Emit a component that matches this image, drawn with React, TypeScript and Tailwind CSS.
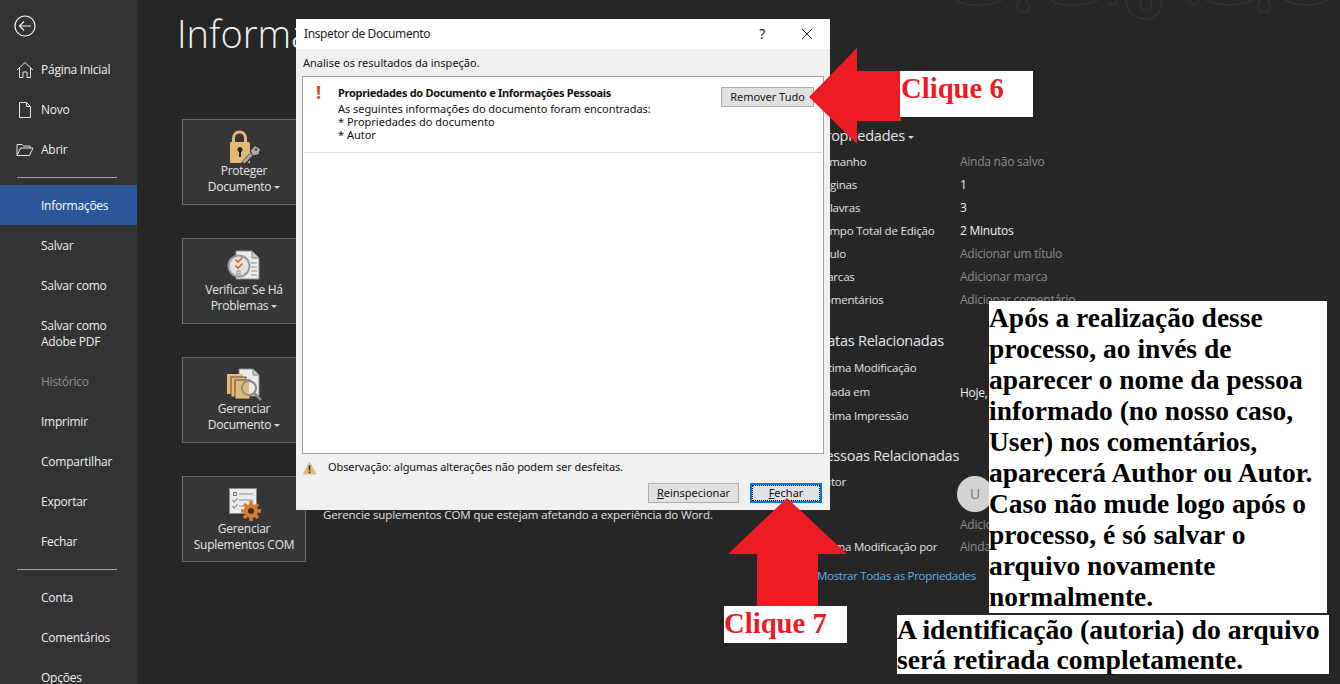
import React from "react";

const uiFont = "font-['Open_Sans','Noto_Sans',sans-serif]";
const serifFont = "font-['Liberation_Serif',serif]";

const LockIcon = () => (
    <svg width="40" height="34" viewBox="-4 0 40 34">
        <path d="M5.500 13V8.500C5.500 4.500 8 2 11.500 2S17.500 4.500 17.500 8.500V13" fill="none" stroke="#e4b877" strokeWidth="3"/>
        <path d="M2 12.500C2 12 2.500 12 3 12H20C21 12 22 12.500 22 14V33H3C2.500 33 2 32.500 2 32Z" fill="#e4b877"/>
        <circle cx="12" cy="19.500" r="2.500" fill="#262626"/>
        <rect x="11" y="20" width="2" height="7" fill="#262626"/>
        <path d="M15 34L23 25.500" stroke="#333" strokeWidth="5"/>
        <path d="M15.500 32.500L24 24" stroke="#a9a9a9" strokeWidth="3"/>
        <path d="M22 21L27 15.500L32.500 19L31 24.500L25 26Z" fill="#a9a9a9" stroke="#333" strokeWidth="1"/>
        <circle cx="28" cy="19.500" r="1.200" fill="#444"/>
    </svg>
);

const CheckIcon = () => (
    <svg width="40" height="34" viewBox="-2 0 40 34">
        <path d="M10 2H26L33 9V30H10Z" fill="#ececec" stroke="#8c8c8c"/>
        <path d="M26 2V9H33" fill="#c9c9c9" stroke="#8c8c8c"/>
        <path d="M25 14H31M25 18H31M25 22H31M25 26H31" stroke="#8c8c8c"/>
        <circle cx="13" cy="17" r="10.500" fill="#e2e2e2" stroke="#9a9a9a" strokeWidth="2"/>
        <path d="M9.500 10.500L12 13L16.500 8.500M9.500 16.500L12 19L16.500 14.500" fill="none" stroke="#d1603a" strokeWidth="1.700"/>
        <rect x="11" y="22" width="3" height="3" fill="none" stroke="#8c8c8c"/>
    </svg>
);

const ManageIcon = () => (
    <svg width="40" height="34" viewBox="-1 0 40 34">
        <path d="M14 1H28L34 7V28H14Z" fill="#ececec" stroke="#8c8c8c"/>
        <path d="M28 1V7H34" fill="#c9c9c9" stroke="#8c8c8c"/>
        <rect x="2" y="6" width="16" height="20" fill="#e4b877"/>
        <rect x="6" y="9" width="15" height="20" fill="#e4b877" stroke="#333" strokeWidth="0.800"/>
        <rect x="10" y="12" width="15" height="19" fill="#e4b877" stroke="#333" strokeWidth="0.800"/>
        <circle cx="24" cy="20" r="7" fill="#ececec" stroke="#8c8c8c" strokeWidth="2.200"/>
        <path d="M24 14A6 6 0 0 0 24 26Z" fill="#e4b877"/>
        <path d="M29 25L36 32" stroke="#8c8c8c" strokeWidth="2.500"/>
    </svg>
);

const AddinIcon = () => (
    <svg width="40" height="34" viewBox="-3 0 40 34">
        <rect x="2.500" y="1.500" width="27" height="25" fill="#ececec" stroke="#8c8c8c"/>
        <rect x="6.500" y="5.500" width="3" height="3" fill="none" stroke="#777"/>
        <path d="M12 7H26M12 13H26M12 19H20" stroke="#8c8c8c"/>
        <path d="M5.500 13L7.500 15L10.500 11M5.500 19L7.500 21L10.500 17" fill="none" stroke="#8c8c8c" strokeWidth="1.200"/>
        <circle cx="24" cy="24" r="5" fill="#333333" stroke="#d9792a" strokeWidth="4"/>
        <path d="M24 14V18M24 30V34M14 24H18M30 24H34M17 17L19.800 19.800M28.200 28.200L31 31M31 17L28.200 19.800M19.800 28.200L17 31" stroke="#d9792a" strokeWidth="3.500"/>
    </svg>
);

const Swirls = () => (
    <svg className="absolute left-[813px] top-0" width="390" height="22" viewBox="0 0 390 22" fill="none" stroke="#333333" strokeWidth="1.500">
        <path d="M5 0C20 8 40 6 52 0"/>
        <path d="M70 0C64 6 68 12 74 12C80 12 82 6 76 0"/>
        <path d="M100 0C115 8 135 6 148 0"/>
        <path d="M166 0C170 6 158 6 158 1"/>
        <circle cx="196" cy="4" r="6"/>
        <path d="M176 0C176 12 186 19 196 19C206 19 212 10 212 0"/>
        <path d="M240 0C236 6 248 6 248 0"/>
        <path d="M256 0C270 7 290 6 304 0"/>
        <path d="M310 0C306 6 308 12 314 12C320 12 322 6 318 0"/>
        <path d="M335 0C350 7 365 6 378 0"/>
    </svg>
);

const Caret = () => (
    <span className="inline-block align-middle ml-[3px] w-0 h-0 border-x-[3px] border-x-transparent border-t-[3px] border-t-[#d6d6d6]"/>
);

const navTop = ["Página Inicial", "Novo", "Abrir"];
const navBottom = ["Conta", "Comentários", "Opções"];
const navMiddle = ["Salvar", "Salvar como"];
const navAfter = ["Imprimir", "Compartilhar", "Exportar", "Fechar"];

const navIcons: Record<string, React.ReactNode> = {
    "Página Inicial": (
        <svg width="18" height="18" viewBox="0 0 18 18" fill="none" stroke="#e6e6e6">
            <path d="M1 9L9 1.500L17 9M3.500 7V16.500H7V11H11V16.500H14.500V7"/>
        </svg>
    ),
    "Novo": (
        <svg width="18" height="18" viewBox="0 0 18 18" fill="none" stroke="#e6e6e6">
            <path d="M3.500 1.500H10.500L14.500 5.500V16.500H3.500ZM10.500 1.500V5.500H14.500"/>
        </svg>
    ),
    "Abrir": (
        <svg width="18" height="18" viewBox="0 0 18 18" fill="none" stroke="#e6e6e6">
            <path d="M1 14.500V3.500H6L7.500 5H14V7M1 14.500H13.500L17 7H4.500Z"/>
        </svg>
    ),
};

const NavItem = ({label, className}: { label: string; className?: string }) => (
    <div className={`relative flex items-center h-10 pl-[41px] text-[12px] tracking-[-0.25px] text-[#efefef] ${className ?? ""}`}>
        {navIcons[label] && <span className="absolute left-[16px] top-[11px]">{navIcons[label]}</span>}
        {label}
    </div>
);

const Sidebar = () => (
    <nav className="w-[137px] shrink-0 h-full bg-[#333333]">
        <div className="h-[50px] pl-[14px] pt-[15px]">
            <svg width="22" height="22" viewBox="0 0 22 22" fill="none" stroke="#f0f0f0" strokeWidth="1.200">
                <circle cx="11" cy="11" r="10"/>
                <path d="M17 11H5.500M10 6.500L5.500 11L10 15.500"/>
            </svg>
        </div>
        {navTop.map((item) => <NavItem key={item} label={item}/>)}
        <div className="ml-[17px] w-[100px] mt-[7px] mb-[7px] h-px bg-[#a6a6a6]"/>
        <NavItem label="Informações" className="pt-[2px] !text-white bg-[#2b579a]"/>
        {navMiddle.map((item) => <NavItem key={item} label={item} className="pt-[2px]"/>)}
        <div className="h-[57px] pl-[41px] pt-[13px] text-[12px] tracking-[-0.25px] leading-[16px] text-[#efefef]">
            Salvar como<br/>Adobe PDF
        </div>
        <NavItem label="Histórico" className="!text-[#8f8f8f]"/>
        {navAfter.map((item) => <NavItem key={item} label={item}/>)}
        <div className="ml-[17px] w-[100px] mt-[7px] mb-[8px] h-px bg-[#a6a6a6]"/>
        {navBottom.map((item) => <NavItem key={item} label={item}/>)}
    </nav>
);

const ToolButton = ({icon, lines, caret, labelClass}: {
    icon: React.ReactNode;
    lines: string[];
    caret?: boolean;
    labelClass?: string;
}) => (
    <div className="w-[124px] h-[86px] shrink-0 border border-[#6b6b6b] bg-[#363636] flex flex-col items-center pt-[10px] text-[12px] tracking-[-0.25px] leading-[16px] text-[#e6e6e6]">
        <div className={`h-[32px] ${labelClass ?? "mb-[1px]"}`}>{icon}</div>
        {lines.map((line, i) => (
            <div key={line}>{line}{caret && i === lines.length - 1 && <Caret/>}</div>
        ))}
    </div>
);

const PropRow = ({label, value, muted, className}: {
    label: string;
    value?: string;
    muted?: boolean;
    className?: string;
}) => (
    <div className={`flex items-center text-[12px] leading-[16px] text-[#e2e2e2] ${className ?? "h-[23px]"}`}>
        <div className="w-[143px] shrink-0 whitespace-nowrap text-[11.500px] tracking-[-0.2px]">{label}</div>
        {value && <div className={`pt-px tracking-[-0.25px] ${muted ? "text-[#8d8d8d]" : "text-[#f2f2f2]"}`}>{value}</div>}
    </div>
);

const Heading = ({children, className}: { children: React.ReactNode; className: string }) => (
    <div className={`text-[14.500px] tracking-[-0.25px] leading-[20px] text-[#e6e6e6] ${className}`}>{children}</div>
);

const Properties = () => (
    <div className="w-[400px] shrink-0 pt-[67px]">
        <Heading className="h-[24px]">Propriedades<Caret/></Heading>
        <PropRow label="Tamanho" value="Ainda não salvo" muted/>
        <PropRow label="Páginas" value="1"/>
        <PropRow label="Palavras" value="3"/>
        <PropRow label="Tempo Total de Edição" value="2 Minutos"/>
        <PropRow label="Título" value="Adicionar um título" muted/>
        <PropRow label="Marcas" value="Adicionar marca" muted/>
        <PropRow label="Comentários" value="Adicionar comentário" muted/>
        <Heading className="mt-[20px] h-[25px]">Datas Relacionadas</Heading>
        <PropRow label="Última Modificação" className="h-[24px]"/>
        <PropRow label="Criada em" value="Hoje," className="h-[24px]"/>
        <PropRow label="Última Impressão" className="h-[24px]"/>
        <Heading className="mt-[18px] h-[27px]">Pessoas Relacionadas</Heading>
        <div className="flex h-[44px] text-[11.500px] tracking-[-0.2px] leading-[16px] text-[#e2e2e2]">
            <div className="w-[140px] shrink-0 pt-[1px]">Autor</div>
            <div className="w-9 h-9 mt-[3px] rounded-full bg-[#d3d3d3] flex items-center justify-center text-[14px] text-[#777777]">U</div>
        </div>
        <div className="h-[18px] pl-[143px] text-[12px] tracking-[-0.25px] leading-[16px] text-[#8d8d8d]">Adicionar um autor</div>
        <PropRow label="Última Modificação por" value="Ainda não salvo" muted/>
        <div className="mt-[10px] text-[11.500px] tracking-[-0.3px] leading-[16px] text-[#63b1ee]">Mostrar Todas as Propriedades</div>
    </div>
);

const Dialog = () => (
    <div className="absolute left-[296px] top-[19px] w-[534px] h-[491px] bg-[#f0f0f0] flex flex-col text-[11px] text-[#111111] font-['Noto_Sans',sans-serif]">
        <div className="h-[30px] shrink-0 bg-white flex items-center pl-[8px] text-[12px] tracking-[-0.4px] text-[#222222]">
            <span className="flex-1">Inspetor de Documento</span>
            <span className="w-[16px] text-center text-[14px] mr-[31px] -mt-[2px]">?</span>
            <svg className="mr-[17px]" width="12" height="12" viewBox="0 0 12 12" stroke="#222222">
                <path d="M1 1L11 11M11 1L1 11"/>
            </svg>
        </div>
        <div className="h-[27px] shrink-0 pl-[7px] pt-[2px] flex items-center">Analise os resultados da inspeção.</div>
        <div className="mx-[6px] h-[378px] shrink-0 bg-white border border-[#a0a0a0]">
            <div className="h-[76px] mx-px border-b border-[#dddddd] flex">
                <div className="w-[34px] pl-[12px] pt-[4px] text-[18px] leading-[22px] font-bold text-[#c94f2d]">!</div>
                <div className="flex-1 pt-[9px] leading-[13px]">
                    <div className="font-bold tracking-[-0.3px] mb-[3px]">Propriedades do Documento e Informações Pessoais</div>
                    <div className="tracking-[-0.05px]">As seguintes informações do documento foram encontradas:</div>
                    <div>* Propriedades do documento</div>
                    <div>* Autor</div>
                </div>
                <div className="mr-[8px] mt-[10px] w-[93px] h-[20px] pt-[1px] bg-[#e1e1e1] border border-[#adadad] flex items-center justify-center">Remover Tudo</div>
            </div>
        </div>
        <div className="h-[27px] shrink-0 flex items-center pl-[6px]">
            <svg width="15" height="14" viewBox="0 0 15 14">
                <path d="M7.500 0.500L14.500 13.500H0.500Z" fill="#e4b877"/>
                <rect x="6.700" y="4.500" width="1.600" height="5" fill="#333333"/>
                <rect x="6.700" y="10.500" width="1.600" height="1.600" fill="#333333"/>
            </svg>
            <span className="ml-[11px] tracking-[-0.1px]">Observação: algumas alterações não podem ser desfeitas.</span>
        </div>
        <div className="flex justify-end pr-[8px] mt-[2px]">
            <div className="w-[91px] h-[20px] bg-[#e1e1e1] border border-[#adadad] flex items-center justify-center"><span><u>R</u>einspecionar</span></div>
            <div className="ml-[11px] w-[72px] h-[20px] bg-[#e1e1e1] border-2 border-[#0078d7] flex items-center justify-center">
                <div className="w-[68px] h-[16px] border border-dotted border-black flex items-center justify-center"><span><u>F</u>echar</span></div>
            </div>
        </div>
    </div>
);

const CalloutLeft = () => (
    <svg className="absolute left-[808px] top-[47px]" width="94" height="98" viewBox="0 0 94 98">
        <path d="M1 50L49 1V24H93V74H49V97Z" fill="#ed1c24"/>
    </svg>
);

const CalloutUp = () => (
    <svg className="absolute left-[727px] top-[497px]" width="121" height="110" viewBox="0 0 121 110">
        <path d="M60 1L120 57H91V110H30V57H1Z" fill="#ed1c24"/>
    </svg>
);

const App = () => {
    return (
        <div className={`relative flex w-[1340px] h-[684px] overflow-hidden bg-[#262626] ${uiFont}`}>
            <Sidebar/>
            <main className="relative flex-1 min-w-0">
                <Swirls/>
                <h1 className="pl-[40px] pt-[7px] h-[119px] text-[38px] leading-[52px] font-light text-[#efefef]">Informações</h1>
                <div className="absolute left-[45px] top-[119px] flex flex-col gap-[33px]">
                    <ToolButton icon={<LockIcon/>} lines={["Proteger", "Documento"]} caret/>
                    <ToolButton icon={<CheckIcon/>} lines={["Verificar Se Há", "Problemas"]} caret/>
                    <ToolButton icon={<ManageIcon/>} lines={["Gerenciar", "Documento"]} caret/>
                    <div className="flex">
                        <ToolButton icon={<AddinIcon/>} lines={["Gerenciar", "Suplementos COM"]} labelClass="mb-[2px]"/>
                        <div className="ml-[17px] pt-[31px] text-[11.500px] tracking-[-0.1px] leading-[16px] text-[#e2e2e2] whitespace-nowrap">
                            Gerencie suplementos COM que estejam afetando a experiência do Word.
                        </div>
                    </div>
                </div>
                <div className="absolute left-[680px] top-[59px]">
                    <Properties/>
                </div>
            </main>
            <Dialog/>
            <CalloutLeft/>
            <CalloutUp/>
            <div className={`absolute left-[900px] top-[71px] w-[133px] h-[46px] bg-white pl-px text-[28.700px] leading-[34px] font-bold text-[#ed1c24] ${serifFont}`}>Clique 6</div>
            <div className={`absolute left-[724px] top-[606px] w-[123px] h-[37px] bg-white text-[28.700px] leading-[35px] font-bold text-[#ed1c24] ${serifFont}`}>Clique 7</div>
            <div className={`absolute left-[989px] top-[301px] w-[338px] h-[312px] pt-px bg-white text-[27.500px] leading-[31px] font-bold text-black ${serifFont}`}>
                Após a realização desse processo, ao invés de aparecer o nome da pessoa informado (no nosso caso, User) nos comentários, aparecerá Author ou Autor. Caso não mude logo após o processo, é só salvar o arquivo novamente normalmente.
            </div>
            <div className={`absolute left-[897px] top-[615px] w-[432px] h-[59px] bg-white text-[27.700px] leading-[30px] font-bold text-black ${serifFont}`}>
                A identificação (autoria) do arquivo será retirada completamente.
            </div>
        </div>
    );
};

export default App;
